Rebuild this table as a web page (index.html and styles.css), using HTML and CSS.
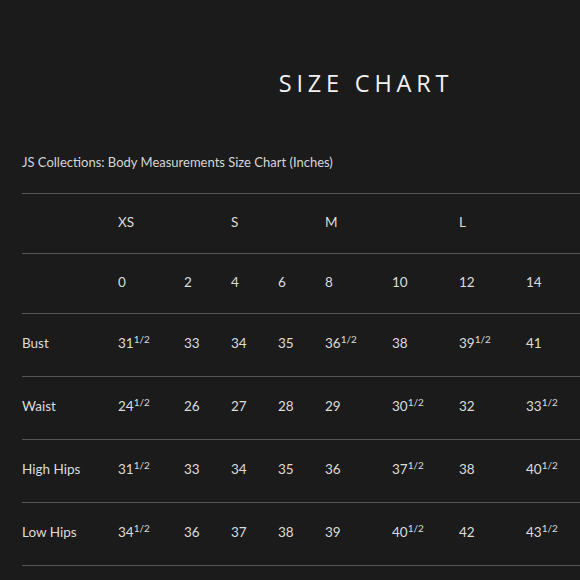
FILE: index.html
```html
<!DOCTYPE html>
<html>
<head>
<meta charset="utf-8">
<link rel="stylesheet" href="styles.css">
</head>
<body>
<div class="page">
  <h1 class="title">SIZE CHART</h1>
  <p class="subtitle">JS Collections: Body Measurements Size Chart (Inches)</p>
  <table class="chart">
    <colgroup>
      <col class="c-label"><col class="c-a"><col class="c-b"><col class="c-b"><col class="c-b"><col class="c-c"><col class="c-c"><col class="c-c"><col class="c-d">
    </colgroup>
    <tr class="head"><td></td><td>XS</td><td></td><td>S</td><td></td><td>M</td><td></td><td>L</td><td></td><td></td></tr>
    <tr class="head"><td></td><td>0</td><td>2</td><td>4</td><td>6</td><td>8</td><td>10</td><td>12</td><td>14</td><td></td></tr>
    <tr><td>Bust</td><td>31<sup>1/2</sup></td><td>33</td><td>34</td><td>35</td><td>36<sup>1/2</sup></td><td>38</td><td>39<sup>1/2</sup></td><td>41</td><td></td></tr>
    <tr><td>Waist</td><td>24<sup>1/2</sup></td><td>26</td><td>27</td><td>28</td><td>29</td><td>30<sup>1/2</sup></td><td>32</td><td>33<sup>1/2</sup></td><td></td></tr>
    <tr><td>High Hips</td><td>31<sup>1/2</sup></td><td>33</td><td>34</td><td>35</td><td>36</td><td>37<sup>1/2</sup></td><td>38</td><td>40<sup>1/2</sup></td><td></td></tr>
    <tr><td>Low Hips</td><td>34<sup>1/2</sup></td><td>36</td><td>37</td><td>38</td><td>39</td><td>40<sup>1/2</sup></td><td>42</td><td>43<sup>1/2</sup></td><td></td></tr>
  </table>
</div>
</body>
</html>
```
FILE: styles.css
```css
html, body {
  margin: 0;
  padding: 0;
  background: #1b1b1b;
  overflow: hidden;
}
body {
  width: 580px;
  height: 580px;
}
.page {
  padding: 0 0 0 22px;
  width: 700px;
  color: #dcdcdc;
  font-family: "Lato", "Open Sans", sans-serif;
}
.title {
  margin: 0;
  padding-top: 69px;
  width: 688px;
  text-align: center;
  font-family: "Open Sans", "Liberation Sans", sans-serif;
  font-weight: 400;
  font-size: 23.5px;
  line-height: 28px;
  letter-spacing: 4.8px;
  color: #f2f2f2;
}
.subtitle {
  margin: 57px 0 0 0;
  font-size: 13px;
  line-height: 16px;
  color: #d6d6d6;
}
.chart {
  margin-top: 23px;
  border-collapse: collapse;
  table-layout: fixed;
  width: 680px;
  font-size: 13.5px;
}
.chart tr {
  border-top: 1px solid #555;
  border-bottom: 1px solid #555;
}
.chart tr.head td {
  height: 56px;
  padding: 0 0 3px 0;
}
.chart td {
  height: 58px;
  padding: 0 0 4px 0;
  vertical-align: middle;
  text-align: left;
  white-space: nowrap;
}
.chart sup {
  font-size: 10px;
  line-height: 0;
  vertical-align: 5px;
}
.c-label { width: 96px; }
.c-a { width: 66px; }
.c-b { width: 47px; }
.c-c { width: 67px; }
.c-d { width: 68px; }
```
